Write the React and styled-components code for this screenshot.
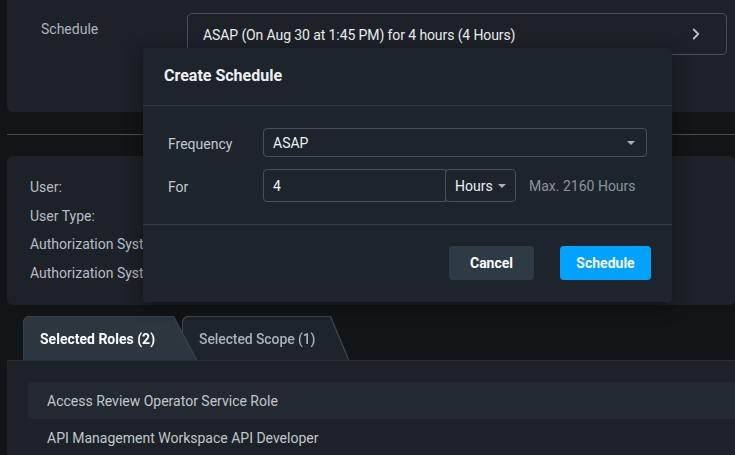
import React from "react";
import styled, { createGlobalStyle } from "styled-components";
import { ChevronRight } from "lucide-react";

const GlobalStyle = createGlobalStyle`
  body {
    margin: 0;
    background: #121518;
    font-family: Roboto, "Liberation Sans", sans-serif;
    color: #e8ebee;
  }
`;

const infoRows = ["User:", "User Type:", "Authorization Syst", "Authorization Syst"];
const roles = [
  "Access Review Operator Service Role",
  "API Management Workspace API Developer",
];

export default function App() {
  return (
    <>
      <GlobalStyle />
      <Page>
        <TopPanel>
          <FieldLabel>Schedule</FieldLabel>
          <ScheduleBox>
            <span>ASAP (On Aug 30 at 1:45 PM) for 4 hours (4 Hours)</span>
            <ChevronRight size={18} strokeWidth={2.4} color="#b9c1c7" />
          </ScheduleBox>
        </TopPanel>

        <Divider />

        <InfoPanel>
          {infoRows.map((label, i) => (
            <InfoRow key={i}>{label}</InfoRow>
          ))}
        </InfoPanel>

        <TabBar>
          <TabShape $active>
            <TabInner $active>Selected Roles (2)</TabInner>
          </TabShape>
          <TabShape>
            <TabInner>Selected Scope (1)</TabInner>
          </TabShape>
        </TabBar>
        <TabBody>
          {roles.map((role, i) => (
            <RoleRow key={role} $shaded={i === 0}>
              {role}
            </RoleRow>
          ))}
        </TabBody>

        <Modal>
          <ModalHeader>Create Schedule</ModalHeader>
          <ModalBody>
            <FormLabel>Frequency</FormLabel>
            <Select>
              <span>ASAP</span>
              <Caret />
            </Select>
            <FormLabel>For</FormLabel>
            <ForRow>
              <NumberInput>4</NumberInput>
              <UnitSelect>
                Hours
                <Caret />
              </UnitSelect>
              <Hint>Max. 2160 Hours</Hint>
            </ForRow>
          </ModalBody>
          <ModalFooter>
            <Button>Cancel</Button>
            <Button $primary>Schedule</Button>
          </ModalFooter>
        </Modal>
      </Page>
    </>
  );
}

const Page = styled.div`
  position: relative;
  width: 735px;
  height: 455px;
  overflow: hidden;
  padding-left: 7px;
  box-sizing: border-box;
  font-size: 14px;
`;

const TopPanel = styled.div`
  height: 112px;
  box-sizing: border-box;
  background: #1c2228;
  border-bottom-left-radius: 6px;
  display: grid;
  grid-template-columns: 146px 540px;
  padding: 13px 0 0 34px;
`;

const FieldLabel = styled.div`
  color: #aeb5bb;
  padding-top: 8px;
`;

const ScheduleBox = styled.div`
  height: 42px;
  box-sizing: border-box;
  border: 1px solid #46515a;
  border-radius: 5px;
  display: flex;
  align-items: center;
  justify-content: space-between;
  padding: 0 21px 0 15px;
  color: #eceef0;
  span {
    padding-top: 1px;
    letter-spacing: -0.1px;
  }
`;

const Divider = styled.div`
  height: 1px;
  background: #474d52;
  margin: 22px 0 21px;
`;

const InfoPanel = styled.div`
  height: 149px;
  box-sizing: border-box;
  background: #1c2228;
  border-radius: 6px;
  padding: 17px 23px 0;
`;

const InfoRow = styled.div`
  line-height: 28.5px;
  color: #b7bec4;
`;

const TabBar = styled.div`
  display: flex;
  height: 43px;
  margin-top: 12px;
  padding-left: 17px;
`;

const TabShape = styled.div`
  position: relative;
  z-index: ${(p) => (p.$active ? 2 : 1)};
  width: ${(p) => (p.$active ? "172px" : "165px")};
  margin-left: ${(p) => (p.$active ? "0" : "-13px")};
  filter: drop-shadow(1px 0 0 ${(p) => (p.$active ? "#35424c" : "#3a454e")})
    drop-shadow(-1px 0 0 ${(p) => (p.$active ? "#35424c" : "#3a454e")})
    drop-shadow(0 -1px 0 ${(p) => (p.$active ? "#35424c" : "#3a454e")});
`;

const TabInner = styled.div`
  height: 100%;
  box-sizing: border-box;
  background: ${(p) => (p.$active ? "#2b363f" : "#1d242a")};
  border-top-left-radius: 6px;
  clip-path: polygon(
    0 0,
    calc(100% - ${(p) => (p.$active ? "23px" : "18px")}) 0,
    100% 100%,
    0 100%
  );
  display: flex;
  align-items: center;
  padding-left: 16px;
  font-weight: ${(p) => (p.$active ? 700 : 500)};
  color: ${(p) => (p.$active ? "#ffffff" : "#aab3ba")};
  letter-spacing: ${(p) => (p.$active ? "0" : "-0.1px")};
`;

const TabBody = styled.div`
  position: relative;
  z-index: 3;
  background: #1c2228;
  border-top: 1px solid #262e35;
  padding: 21px 0 0 21px;
  height: 100px;
`;

const RoleRow = styled.div`
  height: 37px;
  display: flex;
  align-items: center;
  padding-left: 19px;
  color: #c1c7cc;
  background: ${(p) => (p.$shaded ? "#222930" : "transparent")};
`;

const Modal = styled.div`
  position: absolute;
  z-index: 10;
  left: 143px;
  top: 48px;
  width: 529px;
  background: #1d242b;
  border-radius: 4px;
  box-shadow: 0 4px 18px rgba(0, 0, 0, 0.45);
`;

const ModalHeader = styled.div`
  height: 58px;
  box-sizing: border-box;
  display: flex;
  align-items: center;
  padding: 0 21px 2px;
  font-size: 16px;
  font-weight: 700;
  color: #eef0f2;
  border-bottom: 1px solid #313b44;
`;

const ModalBody = styled.div`
  display: grid;
  grid-template-columns: 95px 1fr;
  row-gap: 12px;
  align-items: center;
  padding: 22px 25px 22px;
  border-bottom: 1px solid #313b44;
`;

const FormLabel = styled.div`
  color: #c3c9ce;
  padding-top: 3px;
`;

const Select = styled.div`
  height: 29px;
  box-sizing: border-box;
  border: 1px solid #46515a;
  border-radius: 4px;
  display: flex;
  align-items: center;
  justify-content: space-between;
  padding: 0 11px 0 9px;
  color: #eef0f2;
`;

const Caret = styled.span`
  width: 0;
  height: 0;
  border-left: 4px solid transparent;
  border-right: 4px solid transparent;
  border-top: 4px solid #aab2b8;
  margin-left: 5px;
`;

const ForRow = styled.div`
  display: flex;
  align-items: center;
`;

const NumberInput = styled.div`
  width: 183px;
  height: 33px;
  box-sizing: border-box;
  border: 1px solid #46515a;
  border-radius: 4px 0 0 4px;
  display: flex;
  align-items: center;
  padding-left: 9px;
  color: #eef0f2;
`;

const UnitSelect = styled.div`
  width: 71px;
  height: 33px;
  box-sizing: border-box;
  border: 1px solid #46515a;
  border-radius: 4px;
  margin-left: -1px;
  display: flex;
  align-items: center;
  padding-left: 9px;
  color: #eef0f2;
`;

const Hint = styled.div`
  margin-left: 13px;
  color: #8b949b;
`;

const ModalFooter = styled.div`
  display: flex;
  justify-content: flex-end;
  gap: 26px;
  padding: 21px 21px 22px;
`;

const Button = styled.button`
  height: 34px;
  width: ${(p) => (p.$primary ? "91px" : "85px")};
  border: none;
  border-radius: 4px;
  background: ${(p) => (p.$primary ? "#00a2ff" : "#2e3a44")};
  color: #ffffff;
  font-family: inherit;
  font-size: 14px;
  font-weight: 700;
  cursor: pointer;
`;
